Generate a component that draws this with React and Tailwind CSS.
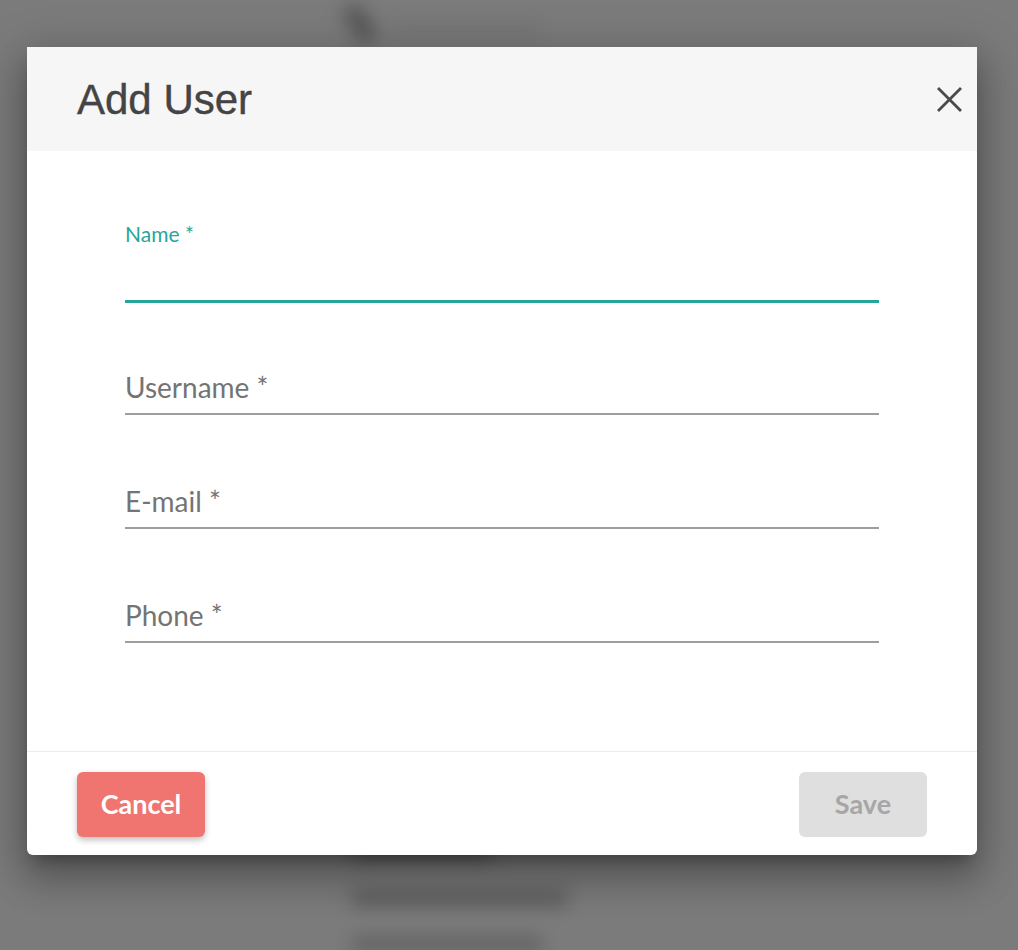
import React from 'react';

const lato = { fontFamily: '"Lato", "Noto Sans", sans-serif' };

function Field({ label }) {
  return (
    <div className="mt-[69px] first:mt-0">
      <label className="block text-[28px] leading-[34px] text-[#747474]">
        {label}
      </label>
      <div className="h-[9px]" />
      <div className="h-[2px] bg-[#9e9e9e]" />
    </div>
  );
}

export default function AddUserModal() {
  return (
    <div className="relative h-[950px] w-full overflow-hidden bg-[#7b7b7b]" style={lato}>
      {/* page behind the overlay, blurred */}
      <div className="h-full w-full blur-[9px] opacity-50">
        <div className="flex items-center gap-5 pl-[350px] pt-[4px]">
          <div className="h-[40px] w-[20px] rotate-[-35deg] rounded-md bg-[#333333]" />
          <div className="mt-[10px] h-[10px] w-[150px] bg-[#6a6a6a]" />
        </div>
        <div className="flex flex-col gap-[30px] pl-[352px] pt-[800px]">
          <div className="h-[16px] w-[140px] bg-[#3f3f3f]" />
          <div className="h-[16px] w-[215px] bg-[#3f3f3f]" />
          <div className="h-[16px] w-[190px] bg-[#4a4a4a]" />
        </div>
      </div>

      {/* dialog */}
      <div className="absolute left-[27px] top-[47px] w-[950px] overflow-hidden rounded-b-[6px] bg-white shadow-[0_24px_38px_3px_rgba(0,0,0,0.2),0_9px_46px_8px_rgba(0,0,0,0.16),0_11px_15px_-7px_rgba(0,0,0,0.3)]">
        <div className="flex h-[104px] items-center justify-between bg-[#f6f6f6] pl-[50px] pr-[8px]">
          <h2 className="text-[42px] font-normal text-[#444444] font-['Liberation_Sans',Arial,sans-serif] [-webkit-text-stroke:0.4px_#444444]">
            Add User
          </h2>
          <button type="button" className="flex h-[40px] w-[40px] items-center justify-center">
            <svg width="25" height="25" viewBox="0 0 25 25" fill="none" stroke="#4a4a4a" strokeWidth="2.8" strokeLinecap="square">
              <line x1="2" y1="2" x2="23" y2="23" />
              <line x1="23" y1="2" x2="2" y2="23" />
            </svg>
          </button>
        </div>

        <div className="px-[98px] pt-[70px] pb-[108px]">
          <div>
            <label className="block text-[21px] leading-[26px] text-[#26a69a]">Name *</label>
            <div className="h-[53px]" />
            <div className="h-[3px] bg-[#26a69a]" />
          </div>
          <div className="mt-[67px]">
            <Field label="Username *" />
          </div>
          <Field label="E-mail *" />
          <Field label="Phone *" />
        </div>

        <div className="flex items-start justify-between border-t border-[#ececec] px-[50px] pt-[20px] pb-[18px]">
          <button
            type="button"
            className="h-[65px] w-[128px] rounded-[6px] bg-[#f07470] text-[27px] font-bold text-white shadow-[0_3px_6px_rgba(0,0,0,0.25)]"
          >
            Cancel
          </button>
          <button
            type="button"
            className="h-[65px] w-[128px] rounded-[6px] bg-[#dfdfdf] text-[27px] font-bold text-[#a6a6a6]"
          >
            Save
          </button>
        </div>
      </div>
    </div>
  );
}
